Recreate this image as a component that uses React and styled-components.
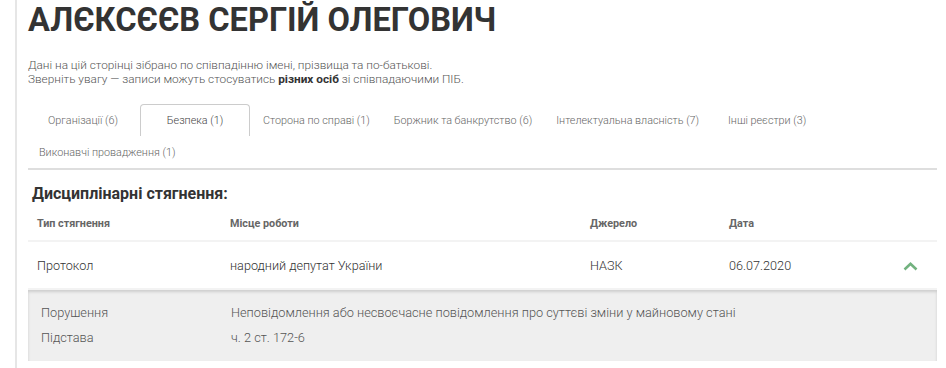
import React from "react";
import styled, { createGlobalStyle } from "styled-components";

const GlobalStyle = createGlobalStyle`
  html, body {
    margin: 0;
    padding: 0;
    background: #fff;
    font-family: Roboto, "Liberation Sans", sans-serif;
  }
`;

const tabs = [
  { label: "Організації (6)" },
  { label: "Безпека (1)", active: true },
  { label: "Сторона по справі (1)" },
  { label: "Боржник та банкрутство (6)" },
  { label: "Інтелектуальна власність (7)" },
  { label: "Інші реєстри (3)" },
  { label: "Виконавчі провадження (1)" },
];

const details = [
  {
    name: "Порушення",
    value:
      "Неповідомлення або несвоєчасне повідомлення про суттєві зміни у майновому стані",
  },
  { name: "Підстава", value: "ч. 2 ст. 172-6" },
];

const App = () => {
  return (
    <>
      <GlobalStyle />
      <Page>
        <Content>
          <Title>АЛЄКСЄЄВ СЕРГІЙ ОЛЕГОВИЧ</Title>
          <Notice>
            Дані на цій сторінці зібрано по співпадінню імені, прізвища та
            по-батькові.
            <br />
            Зверніть увагу — записи можуть стосуватись <b>різних осіб</b> зі
            співпадаючими ПІБ.
          </Notice>
          <TabList>
            {tabs.map((t) => (
              <Tab key={t.label} $active={t.active}>
                {t.label}
              </Tab>
            ))}
          </TabList>
          <SectionTitle>Дисциплінарні стягнення:</SectionTitle>
          <HeadRow>
            <span>Тип стягнення</span>
            <span>Місце роботи</span>
            <span>Джерело</span>
            <span>Дата</span>
          </HeadRow>
          <DataRow>
            <span>Протокол</span>
            <span>народний депутат України</span>
            <span>НАЗК</span>
            <DateCell>
              06.07.2020
              <Chevron width="15" height="9" viewBox="0 0 15 9">
                <path d="M1.5 7.5 L7.5 1.8 L13.5 7.5" />
              </Chevron>
            </DateCell>
          </DataRow>
          <DetailBox>
            {details.map((d) => (
              <DetailRow key={d.name}>
                <span>{d.name}</span>
                <span>{d.value}</span>
              </DetailRow>
            ))}
          </DetailBox>
        </Content>
      </Page>
    </>
  );
};

const Page = styled.div`
  padding-left: 15px;
  height: 368px;
  overflow: hidden;
`;
const Content = styled.div`
  border-left: 2px solid #e6e6e6;
  padding: 0 9px 0 11px;
  min-height: 368px;
`;
const Title = styled.h1`
  margin: 0;
  font-size: 32.6px;
  line-height: 40px;
  font-weight: 700;
  color: #333;
`;
const Notice = styled.p`
  margin: 18px 0 0 0;
  font-size: 11.8px;
  line-height: 14px;
  font-weight: 300;
  color: #555;
  b {
    font-weight: 700;
    color: #333;
  }
`;
const TabList = styled.div`
  display: flex;
  flex-wrap: wrap;
  margin-top: 18px;
  border-bottom: 2px solid #dedede;
`;
const Tab = styled.div`
  box-sizing: border-box;
  height: 32px;
  min-width: 110px;
  padding: 0 10px;
  margin-right: 2px;
  display: flex;
  align-items: center;
  justify-content: center;
  font-size: 10.8px;
  font-weight: 300;
  color: ${(p) => (p.$active ? "#444" : "#666")};
  border: 1px solid ${(p) => (p.$active ? "#ccc" : "transparent")};
  border-bottom: none;
  border-radius: 4px 4px 0 0;
`;
const SectionTitle = styled.h2`
  margin: 12px 0 0 0;
  padding-left: 4px;
  font-size: 16px;
  line-height: 24px;
  font-weight: 700;
  color: #333;
`;
const grid = `
  display: grid;
  grid-template-columns: 193px 360px 139px 1fr;
  align-items: center;
  span, div {
    padding-left: 9px;
  }
`;
const HeadRow = styled.div`
  ${grid}
  height: 34px;
  font-size: 10.8px;
  font-weight: 700;
  color: #666;
  border-bottom: 2px solid #f3f3f3;
`;
const DataRow = styled.div`
  ${grid}
  height: 46px;
  font-size: 12.65px;
  font-weight: 300;
  color: #333;
  border-bottom: 2px solid #f3f3f3;
`;
const DateCell = styled.div`
  display: flex;
  align-items: center;
  justify-content: space-between;
  padding-right: 19px;
`;
const Chevron = styled.svg`
  margin-top: 3px;
  path {
    fill: none;
    stroke: #72b27f;
    stroke-width: 2.6;
  }
`;
const DetailBox = styled.div`
  background: #efefef;
  box-shadow: inset 0 2px 3px rgba(0, 0, 0, 0.14);
  padding: 10px 0 11px 13px;
`;
const DetailRow = styled.div`
  display: grid;
  grid-template-columns: 190px 1fr;
  height: 25px;
  align-items: center;
  font-size: 12.75px;
  font-weight: 300;
  color: #555;
`;

export default App;
